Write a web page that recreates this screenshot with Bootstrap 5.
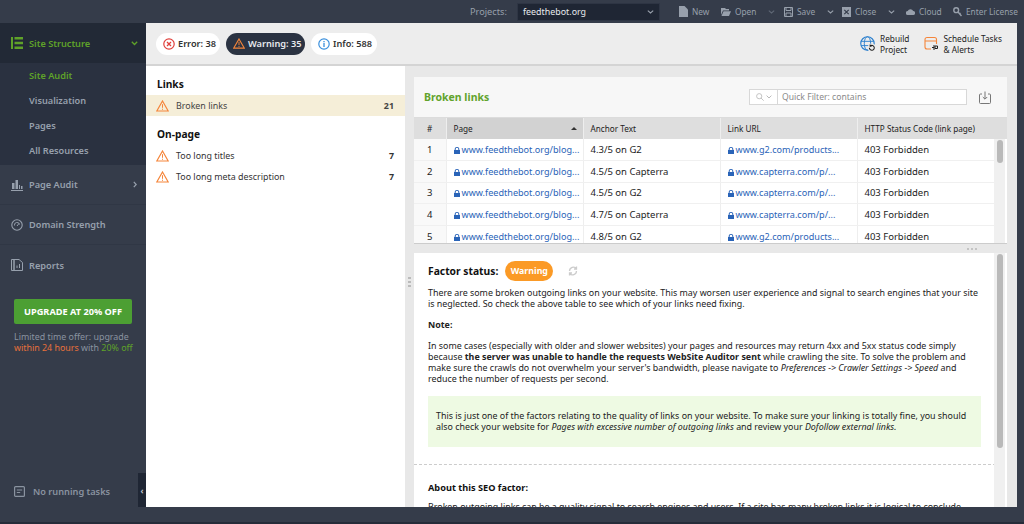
<!DOCTYPE html>
<html lang="en">
<head>
<meta charset="utf-8">
<title>Site Audit</title>
<link href="https://cdn.jsdelivr.net/npm/bootstrap@5.3.0/dist/css/bootstrap.min.css" rel="stylesheet">
<style>
html,body{height:524px;overflow:hidden;}
body{font-family:"Noto Sans",sans-serif;font-size:8.9px;line-height:11px;color:#222;background:#353c4a;}
.shell{width:1024px;height:524px;}
.topbar{height:23px;padding-left:470px;color:#98a0ac;font-size:8.3px;flex:none;white-space:nowrap;}
.proj-label{width:47px;font-size:9.2px;}
.proj-select{width:143px;height:18px;background:#1f2634;border:1px solid #2e3544;color:#e8eaee;padding:0 5px;font-size:8.9px;margin-right:19px;}
.tool{display:flex;align-items:center;gap:4px;}
.tool svg{flex:none;}
.t-new{width:42px}.t-open{width:63px}.t-save{width:58px}.t-close{width:64px}.t-cloud{width:47px}
.middle{height:484px;flex:none;}
.side{width:146px;flex:none;background:#353c4a;color:#97a0ad;font-weight:600;font-size:9.2px;position:relative;white-space:nowrap;}
.side-head{height:40px;background:#222936;color:#5fa229;padding:0 8px 0 11px;}
.side-sub{background:#2a3140;height:102px;}
.side-sub a{display:block;height:25px;line-height:25px;padding-left:29px;color:#97a0ad;text-decoration:none;}
.side-sub a.on{color:#5fa229;}
.side-item{height:40px;padding:0 9px 0 11px;border-bottom:1px solid #303745;}
.side-item.last{border-bottom:0;}
.side-ico{width:18px;margin-right:0;flex:none;display:flex;}
.upgrade{background:#4c9f33;color:#fff;font-weight:700;width:118px;height:25px;margin:14px 0 0 14px;font-size:9.2px;border-radius:2px;border:0;padding:0;}
.promo{margin:7px 0 0 14px;font-weight:400;font-size:8.9px;line-height:11px;color:#8a93a0;white-space:nowrap;}
.promo .o{color:#e8703a}.promo .g{color:#5fa229}
.tasks{position:absolute;left:14px;top:463px;color:#8a93a0;}
.handle{position:absolute;right:0;top:450px;width:8px;height:34px;background:#1f2634;color:#c5cad2;font-size:9px;}
.main{width:871px;flex:none;background:#e8e8e8;}
.toolbar{height:43px;background:#ededed;border-bottom:2px solid #d4d4d4;padding-left:10px;flex:none;white-space:nowrap;}
.pill{height:22px;border-radius:11px;background:#fff;font-weight:600;font-size:9.2px;color:#333;padding:0 7px;margin-right:6px;gap:3px;}
.pill svg{flex:none;}
.pill.dark{background:#2b3342;color:#e8eaee;}
.p-err{width:64px}.p-warn{width:79px}.p-info{width:66px}
.tool-act{line-height:11px;color:#222;gap:4px;font-size:8.3px;}
.act-a{margin-right:15px}.act-b{margin-right:15px;}
.body-row{height:441px;}
.leftlist{width:259px;background:#fff;flex:none;padding-top:12px;}
.leftlist h6{font-size:10.2px;line-height:13px;font-weight:700;margin:0;padding:0 11px;color:#111;}
.issue{height:21px;padding:0 11px 0 10px;gap:7px;color:#333;}
.issue.sel{background:#f5eed8;color:#444;}
.issue b{margin-left:auto;}
.leftlist h6.h-links{margin-bottom:4px;}
.leftlist h6.h-onpage{margin:12px 0 4px;}
.rightp{width:612px;flex:none;padding:11px 10px 0 9px;position:relative;}
.drag{position:absolute;left:3px;top:211px;width:3px;height:12px;background:repeating-linear-gradient(#bbb 0 2px,transparent 2px 4px);}
.tblcard{background:#fff;height:167px;overflow:hidden;position:relative;border-bottom:1px solid #ccc;}
.tblhead{height:41px;background:#f7f7f7;padding-left:10px;border-bottom:1px solid #dcdcdc;}
.tblhead .ttl{color:#62a32c;font-weight:700;font-size:10.5px;}
.qf{width:218px;height:16px;background:#fff;border:1px solid #d8d8d8;margin-left:auto;margin-right:12px;color:#8a8a8a;font-size:8.6px;}
.qf-ico{width:28px;height:100%;border-right:1px solid #d8d8d8;gap:2px;}
.exp{margin-right:16px;}
.tbl{table-layout:fixed;width:580px;margin:0;border-collapse:collapse;font-size:9.5px;}
.tbl th{background:#dedede;height:21px;font-weight:400;font-size:8.2px;color:#222;padding:0 0 0 7px;border:0;border-right:1px solid #eee;vertical-align:middle;white-space:nowrap;}
.tbl th.sorted{background:#d2d2d2;position:relative;}
.tbl td{height:21.6px;padding:0 0 0 7px;border:0;border-right:1px solid #eee;border-bottom:1px solid #f0f0f0;vertical-align:middle;white-space:nowrap;overflow:hidden;background:#fff;color:#222;}
.tbl .num{text-align:center;padding:0;background:#f9f9f9;}
.tbl th.num{background:#dedede;}
.tbl a{color:#2a64b8;text-decoration:none;font-size:9.1px;}
.tbl svg{margin-right:2px;vertical-align:-1px;}
.sortm{position:absolute;right:6px;top:9px;width:0;height:0;border:3px solid transparent;border-top:0;border-bottom:3px solid #333;}
.sb{position:absolute;right:2px;top:0;width:11px;background:#f0f0f0;}
.sb i{position:absolute;left:3px;width:6px;background:#b9b9b9;border-radius:3px;display:block;}
.sb1{top:62px;bottom:0;}
.sb1 i{top:1px;height:23px;}
.th-fill{position:absolute;right:0;top:41px;width:13px;height:21px;background:#dedede;}
.split{height:9px;padding-right:30px;}
.split span{width:10px;height:2px;background:repeating-linear-gradient(90deg,#c4c4c4 0 2px,transparent 2px 4px);}
.desc{background:#fff;height:254px;overflow:hidden;position:relative;padding:7px 0 0 14px;white-space:nowrap;}
.desc p{margin:0;}
.fs{font-size:10.3px;font-weight:700;color:#111;height:22px;gap:7px;margin-bottom:4.5px;}
.warnb{background:#fb9a26;color:#fff;border-radius:10px;height:20px;width:48px;font-size:8.8px;font-weight:700;}
.desc p.note{margin:10px 0;font-weight:700;}
.greenbox{background:#eefae3;width:553px;height:51px;padding:14.5px 8px 0 8px;margin:12px 0 17px;}
.dash{border-top:1px dashed #ccc;margin:0 11px 0 -14px;}
.sb2{top:0;bottom:0;}
.sb2 i{top:1px;height:194px;}
.desc p.ab{font-weight:700;margin:17.5px 0 8px;color:#111;font-size:9.2px;}
.botstrip{height:17px;flex:none;background:#353c4a;border-bottom:2px solid #262c39;}
.rstrip{flex:1;}
</style>
</head>
<body>
<svg width="0" height="0" class="position-absolute">
  <symbol id="lk" viewBox="0 0 6 7"><path d="M0 3h6v4H0z" fill="#2a64b8"/><path d="M1.200 3V2a1.800 1.800 0 0 1 3.600 0v1" fill="none" stroke="#2a64b8"/></symbol>
  <symbol id="wr" viewBox="0 0 13 12"><path d="M6.500 1 12.200 11H.8z" fill="none" stroke="#f5853a" stroke-width="1.200"/><path d="M6.500 4.200v3.600M6.500 8.700v1.100" fill="none" stroke="#f5853a"/></symbol>
</svg>
<div class="shell d-flex flex-column">
  <div class="topbar d-flex align-items-center">
    <span class="proj-label">Projects:</span>
    <div class="proj-select d-flex align-items-center justify-content-between"><span>feedthebot.org</span><svg width="7" height="4" viewBox="0 0 7 4"><path d="M.8.6 3.500 3 6.200.6" fill="none" stroke="#98a0ac" stroke-width="1.100"/></svg></div>
    <div class="tool t-new"><svg width="9" height="11" viewBox="0 0 9 11"><path d="M0 0h5.500L9 3.500V11H0z" fill="#98a0ac"/></svg><span>New</span></div>
    <div class="tool t-open"><svg width="10" height="10" viewBox="0 0 10 10"><path d="M0 1h4l1 1h3v1.500H2L0 8zM2.500 4.200H10L8 9H.5z" fill="#98a0ac"/></svg><span>Open</span><svg class="ms-2" width="7" height="4" viewBox="0 0 7 4"><path d="M.8.6 3.500 3 6.200.6" fill="none" stroke="#5f6775" stroke-width="1.100"/></svg></div>
    <div class="tool t-save"><svg width="9" height="10" viewBox="0 0 9 10"><path d="M.5.500h8v9h-8zM2 .5v3h5v-3M2 9.500V6h5v3.500" fill="none" stroke="#98a0ac"/></svg><span>Save</span><svg class="ms-2" width="7" height="4" viewBox="0 0 7 4"><path d="M.8.6 3.500 3 6.200.6" fill="none" stroke="#98a0ac" stroke-width="1.100"/></svg></div>
    <div class="tool t-close"><svg width="9" height="10" viewBox="0 0 9 10"><path d="M0 0h9v10H0z" fill="#98a0ac"/><path d="M2.300 2.800 6.700 7.200M6.700 2.800 2.300 7.200" stroke="#353c4a" stroke-width="1.200"/></svg><span>Close</span><svg class="ms-2" width="7" height="4" viewBox="0 0 7 4"><path d="M.8.6 3.500 3 6.200.6" fill="none" stroke="#98a0ac" stroke-width="1.100"/></svg></div>
    <div class="tool t-cloud"><svg width="9" height="7" viewBox="0 0 9 7"><path d="M2 7a2 2 0 0 1-.3-4A3 3 0 0 1 7.200 3 2 2 0 0 1 7 7z" fill="#98a0ac"/></svg><span>Cloud</span></div>
    <div class="tool"><svg width="9" height="10" viewBox="0 0 9 10"><circle cx="3.200" cy="3.200" r="2.400" fill="none" stroke="#98a0ac" stroke-width="1.400"/><path d="m5 5 3.500 4M6.500 7l1-1" stroke="#98a0ac" stroke-width="1.400"/></svg><span>Enter License</span></div>
  </div>

  <div class="middle d-flex">
    <aside class="side">
      <div class="side-head d-flex align-items-center">
        <span class="side-ico"><svg width="12" height="12" viewBox="0 0 12 12" fill="#5fa229"><path d="M0 0h2v12H0zM3.500 0H12v2.500H3.500zM3.500 4.700H12v2.500H3.500zM3.500 9.500H12V12H3.500z"/></svg></span>
        <span>Site Structure</span>
        <svg class="ms-auto" width="7" height="5" viewBox="0 0 7 5"><path d="M.8.8 3.500 3.500 6.200.8" fill="none" stroke="#5fa229" stroke-width="1.300"/></svg>
      </div>
      <nav class="side-sub">
        <a class="on" href="#">Site Audit</a>
        <a href="#">Visualization</a>
        <a href="#">Pages</a>
        <a href="#">All Resources</a>
      </nav>
      <div class="side-item d-flex align-items-center">
        <span class="side-ico"><svg width="12" height="12" viewBox="0 0 12 12" fill="#97a0ad"><path d="M0 11h12v1H0zM1 4h2.500v6H1zM4.500 1H7v9H4.500zM8 6h1v4H8zM10 7h1.500v3H10z"/></svg></span>
        <span>Page Audit</span>
        <svg class="ms-auto" width="4" height="7" viewBox="0 0 4 7"><path d="M.8.800 3.200 3.500.8 6.200" fill="none" stroke="#97a0ad" stroke-width="1.200"/></svg>
      </div>
      <div class="side-item d-flex align-items-center">
        <span class="side-ico"><svg width="12" height="12" viewBox="0 0 12 12" fill="none" stroke="#97a0ad"><circle cx="6" cy="6" r="5.200" stroke-width="1.100"/><path d="M3.500 6.500a2.500 2.500 0 0 1 5-1M6 7l2-2.500" stroke-width="1"/></svg></span>
        <span>Domain Strength</span>
      </div>
      <div class="side-item last d-flex align-items-center">
        <span class="side-ico"><svg width="12" height="12" viewBox="0 0 12 12" fill="none" stroke="#97a0ad"><path d="M.5.500h2.500v11H.5zM3 .500h5l3.500 3v8H3zM6 9V6.500M8.500 9V5"/></svg></span>
        <span>Reports</span>
      </div>
      <button type="button" class="btn upgrade d-block text-center">UPGRADE AT 20% OFF</button>
      <div class="promo">Limited time offer: upgrade<br><span class="o">within 24 hours</span> with <span class="g">20% off</span></div>
      <div class="tasks d-flex align-items-center gap-2">
        <svg width="11" height="11" viewBox="0 0 11 11" fill="none" stroke="#8a93a0"><rect x=".6" y=".6" width="9.800" height="9.800" rx="1" stroke-width="1.200"/><path d="M2.800 4h5.400M2.800 6.500h3.400"/></svg>
        <span>No running tasks</span>
      </div>
      <div class="handle d-flex align-items-center justify-content-center">‹</div>
    </aside>

    <div class="main d-flex flex-column">
      <div class="toolbar d-flex align-items-center">
        <div class="pill p-err d-flex align-items-center"><svg width="12" height="12" viewBox="0 0 12 12" fill="none"><circle cx="6" cy="6" r="5.200" stroke="#e0403c" stroke-width="1.200"/><path d="m4 4 4 4M8 4 4 8" stroke="#e0403c" stroke-width="1.300"/></svg><span>Error: 38</span></div>
        <div class="pill dark p-warn d-flex align-items-center"><svg width="12" height="11"><use href="#wr"/></svg><span>Warning: 35</span></div>
        <div class="pill p-info d-flex align-items-center"><svg width="12" height="12" viewBox="0 0 12 12" fill="none"><circle cx="6" cy="6" r="5.200" stroke="#3a8fdc" stroke-width="1.200"/><path d="M6 5v4M6 3v1.200" stroke="#3a8fdc" stroke-width="1.300"/></svg><span>Info: 588</span></div>
        <div class="ms-auto d-flex align-items-center">
          <div class="tool-act act-a d-flex align-items-center">
            <svg width="16" height="16" viewBox="0 0 15 15" fill="none" stroke="#2f82cf"><circle cx="7" cy="7" r="6.300" stroke-width="1.100"/><ellipse cx="7" cy="7" rx="3" ry="6.300" stroke-width=".9"/><path d="M1 5h12M1 9h12" stroke-width=".9"/><circle cx="11" cy="11" r="3.800" fill="#ededed" stroke="none"/><path d="M8.800 11a2.300 2.300 0 1 0 1-1.800M9.500 8v1.500H11" stroke="#222" stroke-width="1"/></svg>
            <span>Rebuild<br>Project</span>
          </div>
          <div class="tool-act act-b d-flex align-items-center">
            <svg width="15" height="15" viewBox="0 0 15 15" fill="none"><path d="M7 13H3a2 2 0 0 1-2-2V3.500a2 2 0 0 1 2-2h7.500a2 2 0 0 1 2 2V8M1 5h11.500" stroke="#f5853a" stroke-width="1.100"/><path d="M10 9v5M8 11.500h2M11 10h2.500v2.500H11z" stroke="#222" stroke-width="1"/></svg>
            <span>Schedule Tasks<br>&amp; Alerts</span>
          </div>
        </div>
      </div>
      <div class="body-row d-flex">
        <div class="leftlist">
          <h6 class="h-links">Links</h6>
          <div class="issue sel d-flex align-items-center"><svg width="13" height="12"><use href="#wr"/></svg><span>Broken links</span><b>21</b></div>
          <h6 class="h-onpage">On-page</h6>
          <div class="issue d-flex align-items-center"><svg width="13" height="12"><use href="#wr"/></svg><span>Too long titles</span><b>7</b></div>
          <div class="issue d-flex align-items-center"><svg width="13" height="12"><use href="#wr"/></svg><span>Too long meta description</span><b>7</b></div>
        </div>
        <div class="rightp">
          <div class="drag"></div>
          <div class="tblcard">
            <div class="tblhead d-flex align-items-center">
              <span class="ttl">Broken links</span>
              <div class="qf d-flex align-items-center">
                <span class="qf-ico d-flex align-items-center justify-content-center"><svg width="8" height="8" viewBox="0 0 8 8" fill="none" stroke="#c4c4c4"><circle cx="3.200" cy="3.200" r="2.600"/><path d="m5 5 2.700 2.700"/></svg><svg width="6" height="4" viewBox="0 0 6 4"><path d="M.6.600 3 3 5.400.6" fill="none" stroke="#bbb"/></svg></span>
                <span class="ps-1">Quick Filter: contains</span>
              </div>
              <svg class="exp" width="12" height="13" viewBox="0 0 12 13" fill="none" stroke="#777"><path d="M3 3H1.500a1 1 0 0 0-1 1v7.500a1 1 0 0 0 1 1h9a1 1 0 0 0 1-1V4a1 1 0 0 0-1-1H9M6 .5V8M3.800 6 6 8.200 8.200 6"/></svg>
            </div>
            <table class="tbl">
              <colgroup><col style="width:32px"><col style="width:137px"><col style="width:137px"><col style="width:137px"><col style="width:137px"></colgroup>
              <thead><tr><th class="num">#</th><th class="sorted">Page<span class="sortm"></span></th><th>Anchor Text</th><th>Link URL</th><th>HTTP Status Code (link page)</th></tr></thead>
              <tbody>
                <tr><td class="num">1</td><td><a href="#"><svg width="6" height="7"><use href="#lk"/></svg>www.feedthebot.org/blog...</a></td><td>4.3/5 on G2</td><td><a href="#"><svg width="6" height="7"><use href="#lk"/></svg>www.g2.com/products...</a></td><td>403 Forbidden</td></tr>
                <tr><td class="num">2</td><td><a href="#"><svg width="6" height="7"><use href="#lk"/></svg>www.feedthebot.org/blog...</a></td><td>4.5/5 on Capterra</td><td><a href="#"><svg width="6" height="7"><use href="#lk"/></svg>www.capterra.com/p/...</a></td><td>403 Forbidden</td></tr>
                <tr><td class="num">3</td><td><a href="#"><svg width="6" height="7"><use href="#lk"/></svg>www.feedthebot.org/blog...</a></td><td>4.5/5 on G2</td><td><a href="#"><svg width="6" height="7"><use href="#lk"/></svg>www.capterra.com/p/...</a></td><td>403 Forbidden</td></tr>
                <tr><td class="num">4</td><td><a href="#"><svg width="6" height="7"><use href="#lk"/></svg>www.feedthebot.org/blog...</a></td><td>4.7/5 on Capterra</td><td><a href="#"><svg width="6" height="7"><use href="#lk"/></svg>www.capterra.com/p/...</a></td><td>403 Forbidden</td></tr>
                <tr><td class="num">5</td><td><a href="#"><svg width="6" height="7"><use href="#lk"/></svg>www.feedthebot.org/blog...</a></td><td>4.8/5 on G2</td><td><a href="#"><svg width="6" height="7"><use href="#lk"/></svg>www.g2.com/products...</a></td><td>403 Forbidden</td></tr>
              </tbody>
            </table>
            <div class="th-fill"></div>
            <div class="sb sb1"><i></i></div>
          </div>
          <div class="split d-flex align-items-center justify-content-end"><span></span></div>
          <div class="desc">
            <div class="fs d-flex align-items-center"><span>Factor status:</span><span class="warnb d-flex align-items-center justify-content-center">Warning</span><svg class="ms-2" width="10" height="10" viewBox="0 0 10 10" fill="none" stroke="#ccc" stroke-width="1.300"><path d="M8.500 2.500A4 4 0 0 0 1.500 5M1.500 7.500A4 4 0 0 0 8.500 5M8.500 .5v2.500H6M1.500 9.500V7H4"/></svg></div>
            <p>There are some broken outgoing links on your website. This may worsen user experience and signal to search engines that your site<br>is neglected. So check the above table to see which of your links need fixing.</p>
            <p class="note">Note:</p>
            <p>In some cases (especially with older and slower websites) your pages and resources may return 4xx and 5xx status code simply<br>because <b>the server was unable to handle the requests WebSite Auditor sent</b> while crawling the site. To solve the problem and<br>make sure the crawls do not overwhelm your server's bandwidth, please navigate to <i>Preferences -&gt; Crawler Settings -&gt; Speed</i> and<br>reduce the number of requests per second.</p>
            <div class="greenbox"><p>This is just one of the factors relating to the quality of links on your website. To make sure your linking is totally fine, you should<br>also check your website for <i>Pages with excessive number of outgoing links</i> and review your <i>Dofollow external links.</i></p></div>
            <div class="dash"></div>
            <p class="ab">About this SEO factor:</p>
            <p>Broken outgoing links can be a quality signal to search engines and users. If a site has many broken links it is logical to conclude</p>
            <div class="sb sb2"><i></i></div>
          </div>
        </div>
      </div>
    </div>
    <div class="rstrip"></div>
  </div>
  <div class="botstrip"></div>
</div>
<script src="https://cdn.jsdelivr.net/npm/bootstrap@5.3.0/dist/js/bootstrap.bundle.min.js"></script>
</body>
</html>
